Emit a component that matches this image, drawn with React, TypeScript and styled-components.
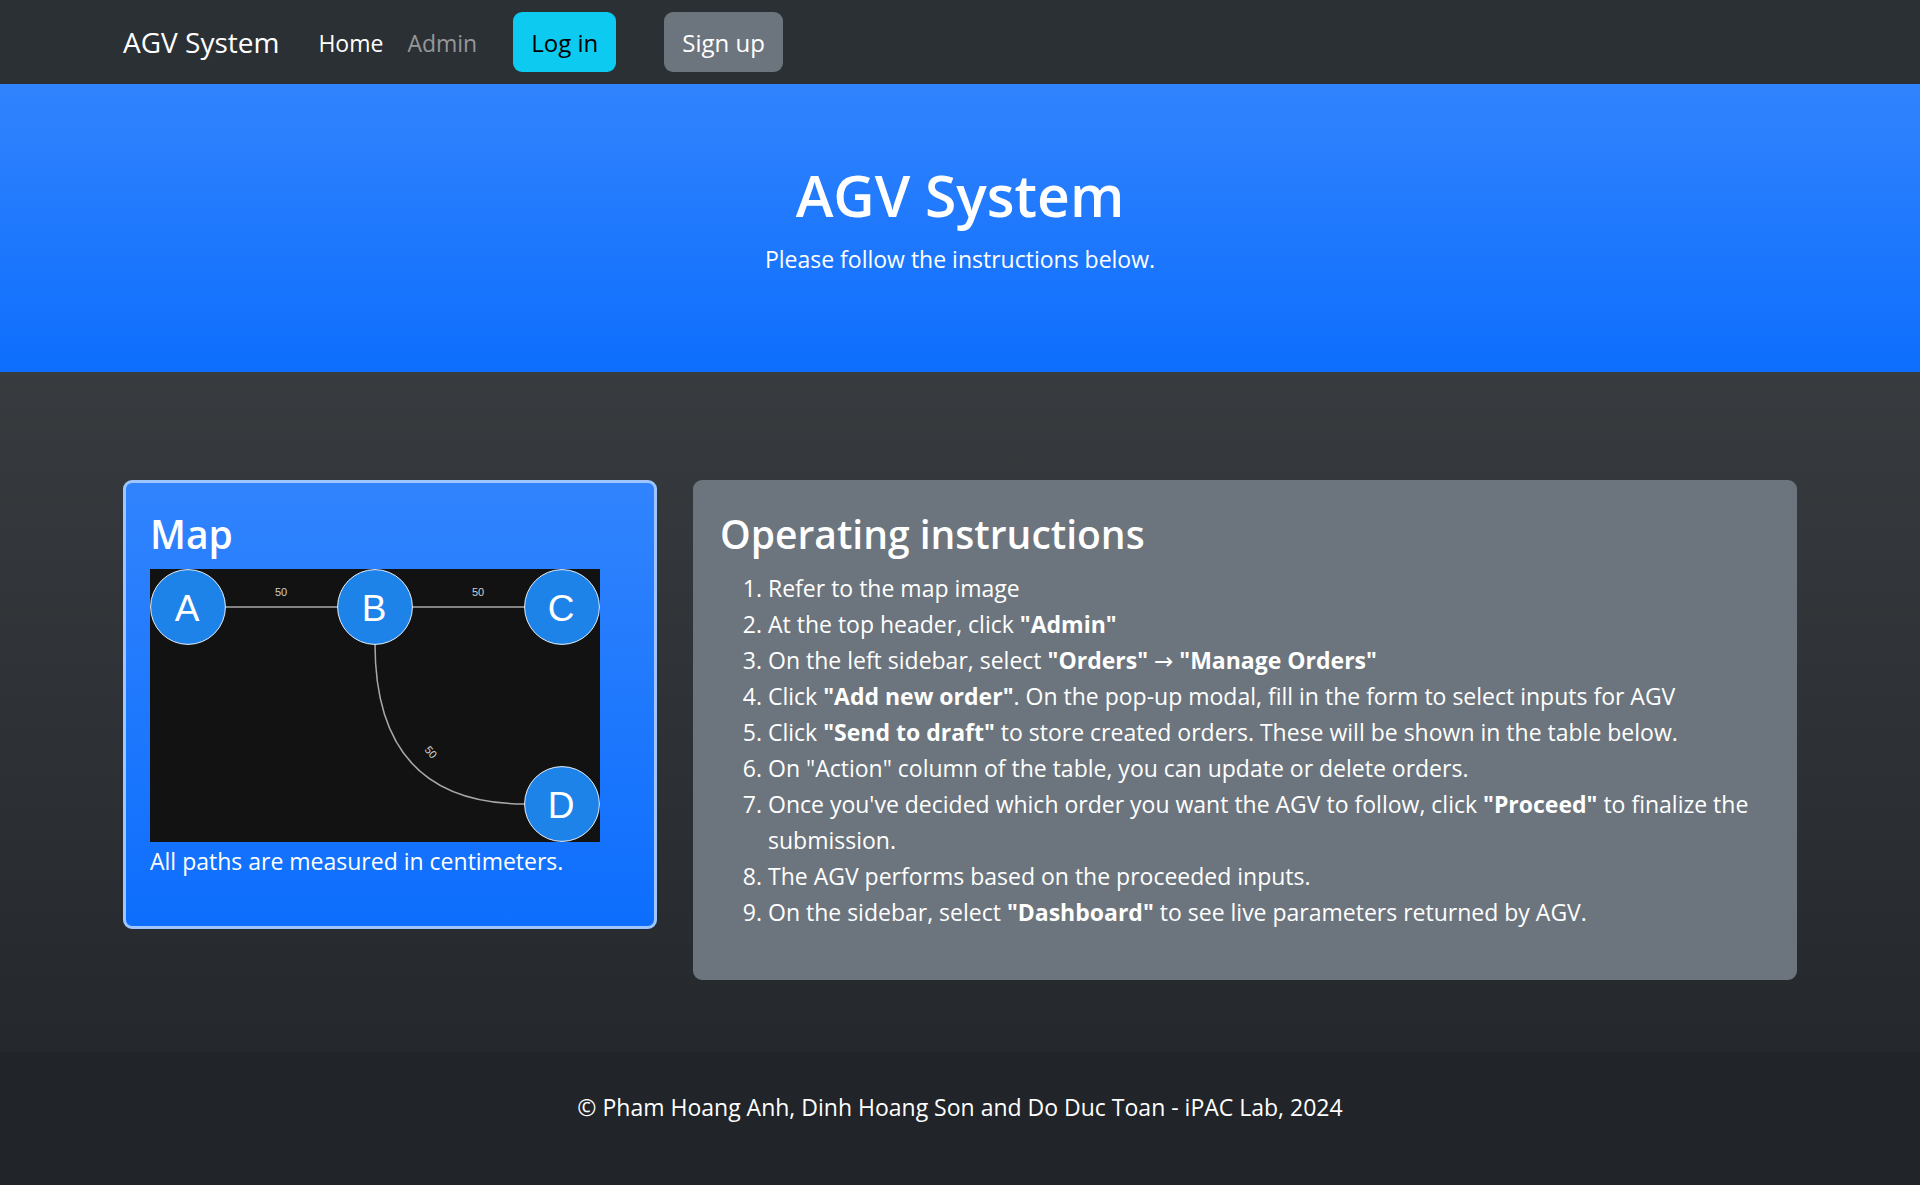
import React from "react";
import styled, { createGlobalStyle } from "styled-components";

const sans = `"Segoe UI", "Open Sans", "Noto Sans", sans-serif`;

const GlobalStyle = createGlobalStyle`
  *, *::before, *::after { box-sizing: border-box; }
  html { background: #212529; }
  body {
    margin: 0;
    background: #212529 linear-gradient(180deg, rgba(255, 255, 255, 0.15), rgba(255, 255, 255, 0));
    color: #fff;
    font-family: ${sans};
    font-size: 23px;
    line-height: 36px;
  }
`;

const Container = styled.div`
  width: 100%;
  max-width: 1710px;
  margin: 0 auto;
  padding: 0 18px;
`;

const Navbar = styled.nav`
  background: #2b3035;
  padding: 12px 0;
`;

const NavRow = styled(Container)`
  display: flex;
  align-items: center;
`;

const Brand = styled.a`
  margin-right: 27px;
  color: #fff;
  font-size: 28px;
  line-height: 38px;
  text-decoration: none;
`;

const NavList = styled.ul`
  display: flex;
  margin: 0;
  padding: 0;
  list-style: none;
`;

const NavLink = styled.a<{ $active?: boolean }>`
  display: block;
  padding: 13px 12px 11px;
  color: ${(p) => (p.$active ? "#fff" : "#959799")};
  text-decoration: none;
`;

const NavButtons = styled.div`
  display: flex;
  gap: 48px;
  margin-left: 24px;
`;

const NavButton = styled.button<{ $tone: "info" | "secondary" }>`
  padding: 13px 18px 11px;
  border: 0;
  border-radius: 9px;
  background: ${(p) => (p.$tone === "info" ? "#0dcaf0" : "#6c757d")};
  color: ${(p) => (p.$tone === "info" ? "#000" : "#fff")};
  font: inherit;
  font-size: 24px;
  cursor: pointer;
`;

const Hero = styled.header`
  padding: 72px 0 95px;
  background: #0d6efd linear-gradient(180deg, rgba(255, 255, 255, 0.15), rgba(255, 255, 255, 0));
  text-align: center;
`;

const HeroTitle = styled.h1`
  margin: 0 0 7px;
  font-size: 57px;
  font-weight: 600;
  line-height: 78px;
`;

const Text = styled.p`
  margin: 0;
`;

const Content = styled(Container)`
  display: grid;
  grid-template-columns: minmax(0, 534fr) minmax(0, 1104fr);
  align-items: start;
  gap: 36px;
  padding-top: 108px;
  padding-bottom: 72px;
`;

const Card = styled.section<{ $tone: "primary" | "secondary" }>`
  padding: 24px 24px 47px;
  border: 3px solid ${(p) => (p.$tone === "primary" ? "#9ec5fe" : "#6c757d")};
  border-radius: 9px;
  background: ${(p) =>
    p.$tone === "primary"
      ? "#0d6efd linear-gradient(180deg, rgba(255, 255, 255, 0.15), rgba(255, 255, 255, 0))"
      : "#6c757d"};
`;

const CardTitle = styled.h2`
  margin: 0;
  padding-bottom: 9px;
  font-size: 39px;
  font-weight: 600;
  line-height: 53px;
`;

const MapDrawing = styled.svg`
  display: block;
  width: 450px;
  max-width: 100%;
  height: auto;
  margin-bottom: 1px;
  background: #121212;
  font-family: "Liberation Sans", Arial, sans-serif;
`;

const Steps = styled.ol`
  margin: 0;
  padding: 1px 0 0 48px;
`;

const Arrow = styled.span`
  font-family: "DejaVu Sans", sans-serif;
  line-height: 1;
`;

const Footer = styled.footer`
  padding: 37px 0 59px;
  background: #212529;
  text-align: center;
`;

const nodes = [
  { name: "A", x: 38, y: 38 },
  { name: "B", x: 225, y: 38 },
  { name: "C", x: 412, y: 38 },
  { name: "D", x: 412, y: 235 },
];

function TrackMap() {
  return (
    <MapDrawing viewBox="0 0 450 273" role="img" aria-label="Map of stations A, B, C and D">
      <g fill="none" stroke="#a8a8a8" strokeWidth="1.5">
        <path d="M75 38H188" />
        <path d="M262 38H375" />
        <path d="M225 75Q225 235 375 235" />
      </g>
      <g fill="#d0d0d0" fontSize="11" textAnchor="middle">
        <text x="131" y="27">50</text>
        <text x="328" y="27">50</text>
        <text transform="translate(281 183) rotate(50)" y="4">50</text>
      </g>
      {nodes.map((n) => (
        <g key={n.name}>
          <circle cx={n.x} cy={n.y} r="37.4" fill="#1e83e9" stroke="#e8f1fb" strokeWidth="1" />
          <text x={n.x - 1} y={n.y + 13.5} fill="#fff" fontSize="37" textAnchor="middle">
            {n.name}
          </text>
        </g>
      ))}
    </MapDrawing>
  );
}

export default function App() {
  return (
    <>
      <GlobalStyle />
      <Navbar>
        <NavRow>
          <Brand href="#">AGV System</Brand>
          <NavList>
            <li><NavLink href="#" $active>Home</NavLink></li>
            <li><NavLink href="#admin">Admin</NavLink></li>
          </NavList>
          <NavButtons>
            <NavButton type="button" $tone="info">Log in</NavButton>
            <NavButton type="button" $tone="secondary">Sign up</NavButton>
          </NavButtons>
        </NavRow>
      </Navbar>
      <Hero>
        <HeroTitle>AGV System</HeroTitle>
        <Text>Please follow the instructions below.</Text>
      </Hero>
      <main>
        <Content>
          <Card $tone="primary">
            <CardTitle>Map</CardTitle>
            <TrackMap />
            <Text>All paths are measured in centimeters.</Text>
          </Card>
          <Card $tone="secondary">
            <CardTitle>Operating instructions</CardTitle>
            <Steps>
              <li>Refer to the map image</li>
              <li>At the top header, click <b>"Admin"</b></li>
              <li>On the left sidebar, select <b>"Orders"</b> <Arrow>→</Arrow> <b>"Manage Orders"</b></li>
              <li>Click <b>"Add new order"</b>. On the pop-up modal, fill in the form to select inputs for AGV</li>
              <li>Click <b>"Send to draft"</b> to store created orders. These will be shown in the table below.</li>
              <li>On "Action" column of the table, you can update or delete orders.</li>
              <li>Once you've decided which order you want the AGV to follow, click <b>"Proceed"</b> to finalize the submission.</li>
              <li>The AGV performs based on the proceeded inputs.</li>
              <li>On the sidebar, select <b>"Dashboard"</b> to see live parameters returned by AGV.</li>
            </Steps>
          </Card>
        </Content>
      </main>
      <Footer>
        <Text>© Pham Hoang Anh, Dinh Hoang Son and Do Duc Toan - iPAC Lab, 2024</Text>
      </Footer>
    </>
  );
}
